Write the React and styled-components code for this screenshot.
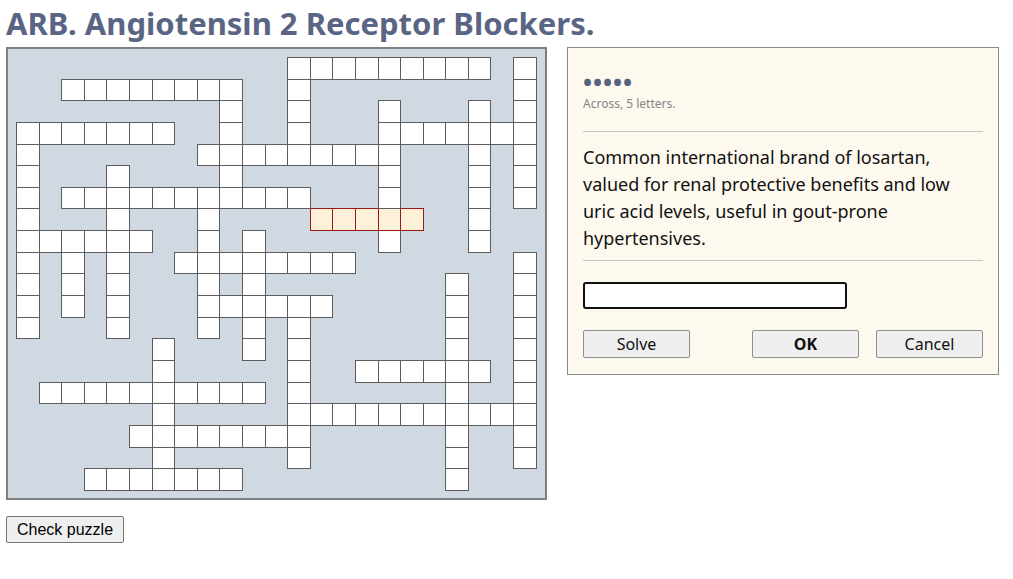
import React from "react";
import styled, { createGlobalStyle } from "styled-components";

const GlobalStyle = createGlobalStyle`
  html, body { margin: 0; padding: 0; background: #ffffff; }
  body { font-family: "Noto Sans", "Open Sans", sans-serif; }
`;

const ROWS = [
  [[12, 20], [22, 22]],
  [[2, 9], [12, 12], [22, 22]],
  [[9, 9], [12, 12], [16, 16], [20, 20], [22, 22]],
  [[0, 6], [9, 9], [12, 12], [16, 22]],
  [[0, 0], [8, 16], [20, 20], [22, 22]],
  [[0, 0], [4, 4], [9, 9], [16, 16], [20, 20], [22, 22]],
  [[0, 0], [2, 12], [16, 16], [20, 20], [22, 22]],
  [[0, 0], [4, 4], [8, 8], [13, 17], [20, 20]],
  [[0, 5], [8, 8], [10, 10], [16, 16], [20, 20]],
  [[0, 0], [2, 2], [4, 4], [7, 14], [22, 22]],
  [[0, 0], [2, 2], [4, 4], [8, 8], [10, 10], [19, 19], [22, 22]],
  [[0, 0], [2, 2], [4, 4], [8, 13], [19, 19], [22, 22]],
  [[0, 0], [4, 4], [8, 8], [10, 10], [12, 12], [19, 19], [22, 22]],
  [[6, 6], [10, 10], [12, 12], [19, 19], [22, 22]],
  [[6, 6], [12, 12], [15, 20], [22, 22]],
  [[1, 10], [12, 12], [19, 19], [22, 22]],
  [[6, 6], [12, 22]],
  [[5, 12], [19, 19], [22, 22]],
  [[6, 6], [12, 12], [19, 19], [22, 22]],
  [[3, 9], [19, 19]],
];
const COLS = 23;
const isOpen = (r, c) => ROWS[r].some(([a, b]) => c >= a && c <= b);
const isHot = (r, c) => r === 7 && c >= 13 && c <= 17;

const Page = styled.div`
  padding: 5px 6px 20px;
`;

const Title = styled.h1`
  margin: 0 0 6px 0;
  font-family: "Noto Sans", "Open Sans", sans-serif;
  font-weight: 700;
  font-size: 31px;
  line-height: 36px;
  color: #5a6584;
  white-space: nowrap;
`;

const Main = styled.div`
  display: flex;
  align-items: flex-start;
  gap: 20px;
`;

const Board = styled.div`
  width: 521px;
  height: 433px;
  padding: 8px;
  background: #d0d9e1;
  border: 2px solid #7f7f7f;
`;

const Grid = styled.table`
  width: 521px;
  height: 433px;
  border-collapse: collapse;
  table-layout: fixed;
  border-spacing: 0;
`;

const Row = styled.tr`
  height: 21.65px;
`;

const Cell = styled.td`
  padding: 0;
  border: ${(p) =>
    p.$hot ? "1px solid #a01818" : p.$open ? "1px solid #5c5c5c" : "none"};
  background: ${(p) => (p.$hot ? "#fff0d9" : p.$open ? "#ffffff" : "transparent")};
`;

const Panel = styled.div`
  width: 400px;
  padding: 22px 15px 16px;
  background: #fdf9ef;
  border: 1px solid #8a8a8a;
`;

const Dots = styled.div`
  font-size: 24px;
  line-height: 24px;
  letter-spacing: 1px;
  color: #56627e;
  font-weight: 700;
`;

const Meta = styled.div`
  margin-top: 2px;
  font-size: 12px;
  line-height: 16px;
  color: #858585;
`;

const Divider = styled.hr`
  margin: ${(p) => p.$m};
  border: 0;
  border-top: 1px solid #c8c4bc;
  height: 0;
`;

const Clue = styled.p`
  margin: 0;
  font-size: 18px;
  line-height: 27px;
  color: #111;
`;

const Answer = styled.input`
  display: block;
  box-sizing: border-box;
  width: 264px;
  height: 27px;
  margin: 0;
  border: 2px solid #111;
  border-radius: 3px;
  background: #fff;
  outline: none;
  padding: 0 3px;
  font-size: 16px;
  font-family: "Noto Sans", sans-serif;
`;

const Buttons = styled.div`
  margin-top: 21px;
  display: flex;
  gap: 17px;
`;

const Btn = styled.button`
  box-sizing: border-box;
  width: 107px;
  height: 28px;
  margin-right: ${(p) => (p.$push ? "auto" : "0")};
  padding: 0;
  background: #efefef;
  border: 1px solid #8f8f8f;
  border-radius: 2px;
  font-family: "Noto Sans", sans-serif;
  font-size: 16px;
  font-weight: ${(p) => (p.$bold ? 700 : 400)};
  color: #111;
`;

const CheckBtn = styled.button`
  margin-top: 16px;
  box-sizing: border-box;
  height: 27px;
  padding: 0 10px;
  background: #efefef;
  border: 1px solid #767676;
  border-radius: 2px;
  font-family: "Liberation Sans", Arial, sans-serif;
  font-size: 16px;
  color: #000;
`;

export default function App() {
  return (
    <>
      <GlobalStyle />
      <Page>
        <Title>ARB. Angiotensin 2 Receptor Blockers.</Title>
        <Main>
          <Board>
            <Grid>
              <tbody>
                {ROWS.map((_, r) => (
                  <Row key={r}>
                    {Array.from({ length: COLS }, (_, c) => (
                      <Cell key={c} $open={isOpen(r, c)} $hot={isHot(r, c)} />
                    ))}
                  </Row>
                ))}
              </tbody>
            </Grid>
          </Board>
          <Panel>
            <Dots>•••••</Dots>
            <Meta>Across, 5 letters.</Meta>
            <Divider $m="19px 0 12px" />
            <Clue>
              Common international brand of losartan, valued for renal protective
              benefits and low uric acid levels, useful in gout-prone hypertensives.
            </Clue>
            <Divider $m="8px 0 21px" />
            <Answer autoFocus />
            <Buttons>
              <Btn $push>Solve</Btn>
              <Btn $bold>OK</Btn>
              <Btn>Cancel</Btn>
            </Buttons>
          </Panel>
        </Main>
        <CheckBtn>Check puzzle</CheckBtn>
      </Page>
    </>
  );
}
